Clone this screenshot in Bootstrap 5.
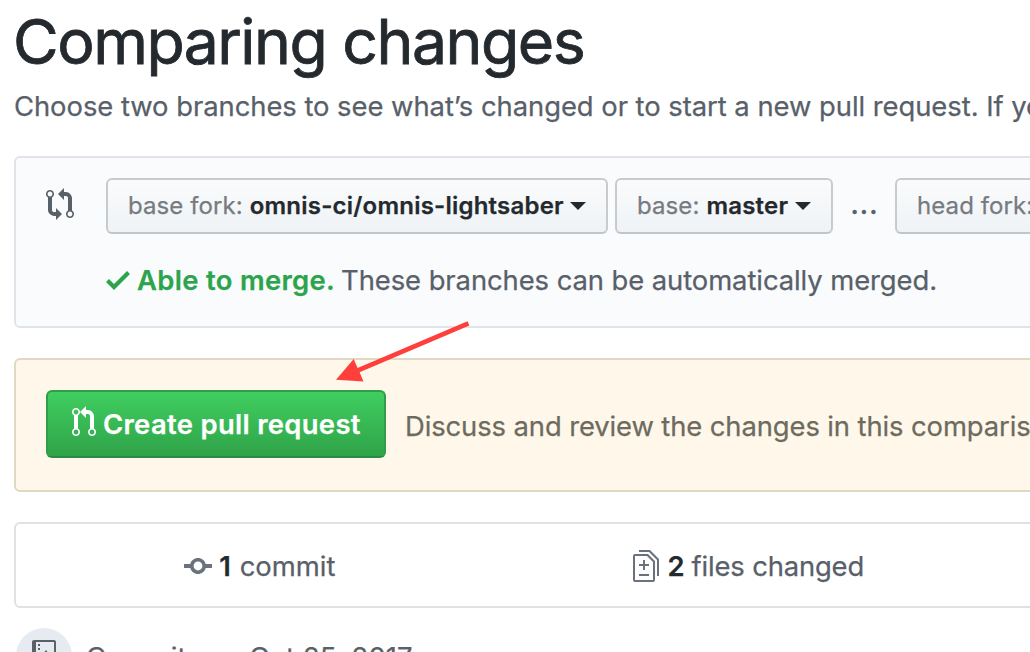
<!DOCTYPE html>
<html lang="en">
<head>
<meta charset="utf-8">
<meta name="viewport" content="width=device-width, initial-scale=1">
<title>Comparing changes</title>
<link href="https://cdn.jsdelivr.net/npm/bootstrap@5.3.0/dist/css/bootstrap.min.css" rel="stylesheet">
<style>
body{font-family:Inter,Roboto,sans-serif;font-size:27.4px;font-weight:400;line-height:42px;color:#586069;background:#fff;height:652px;overflow:hidden;-webkit-text-stroke:.25px}
.page{width:1964px;padding:1px 0 0 14px}
.ink{color:#24292e}
.title{font-size:62.5px;line-height:80px;font-weight:400;letter-spacing:-1.5px;-webkit-text-stroke:.8px;color:#24292e;margin:0 0 4px -1px}
.sub{letter-spacing:-.04px;margin-bottom:29px}
svg{display:block;fill:currentColor;flex:none}
.panel{border:2px solid #dfe2e5;border-radius:6px}
.range{height:172px;background:#fafbfd;border-color:#e0e4e9;padding:20px 0 0 30px}
.sel{height:56px;border:2px solid #c8cbce;border-bottom-color:#c1c5c9;border-radius:6px;background:linear-gradient(#fafbfc,#eff3f6);font-size:24px;line-height:52px;padding:0 20px;color:#24292e}
.sel b{font-weight:600;letter-spacing:.22px}
.sel .lab{color:#777b80;letter-spacing:.08px;margin-right:7px}
.tri{border:8px solid transparent;border-top-color:#24292e;border-bottom:0;margin-left:auto;margin-top:0}
.w-fork{width:502px}.w-base{width:218px}.w-dots{width:62px}
.dots{font-weight:600;font-size:26px;letter-spacing:1px;padding-left:1px;margin-top:-2px}
.merge{margin:25px 0 0 60px;letter-spacing:-.07px}
.merge strong{font-weight:600;color:#2ca44c;letter-spacing:.33px;margin:0 6px 0 7px}
.create{height:134px;border-color:#dfd8c2;background:#fff8ea;padding:30px 0 0 30px;margin-top:30px;color:#6d6b60}
.btn-create{width:340px;height:68px;border:2px solid #2f9d49;border-bottom-color:#2a8c41;border-radius:6px;background:linear-gradient(#40ce60,#2fa349);color:#fff;font-weight:600;font-size:27.4px;letter-spacing:.33px;padding:1px 0 0 24px}
.stats{height:86px;margin-top:30px}
.stats b{font-weight:600}
.ava{width:56px;height:56px;background:#e6ebf1}
</style>
</head>
<body>
<div class="page text-nowrap">
  <h1 class="title">Comparing changes</h1>
  <p class="sub">Choose two branches to see what’s changed or to start a new pull request. If you need to, you can also compare across forks.</p>

  <section class="panel range">
    <div class="d-flex align-items-center">
      <svg width="28" height="32" viewBox="0 0 14 16" style="margin-bottom:4px"><path d="M5 12H4c-.27-.02-.48-.11-.69-.31-.21-.2-.3-.42-.31-.69V4.720A1.993 1.993 0 0 0 2 1a1.993 1.993 0 0 0-1 3.720V11c.03.78.34 1.470.94 2.060.6.59 1.280.91 2.060.94h1v2l3-3-3-3v2zM2 1.800c.66 0 1.200.55 1.200 1.200 0 .65-.55 1.200-1.200 1.200C1.350 4.200.8 3.650.8 3c0-.65.55-1.200 1.200-1.200zm11 9.480V5c-.03-.78-.34-1.470-.94-2.060-.6-.59-1.280-.91-2.060-.94H9V0L6 3l3 3V4h1c.27.02.48.11.69.31.21.2.3.42.31.69v6.280A1.993 1.993 0 0 0 12 15a1.993 1.993 0 0 0 1-3.720zm-1 2.920c-.66 0-1.200-.55-1.200-1.200 0-.65.55-1.200 1.200-1.200.65 0 1.200.55 1.200 1.200 0 .65-.55 1.200-1.200 1.200z"/></svg>
      <div class="sel w-fork d-flex align-items-center" style="margin-left:32px"><span class="lab">base fork:</span><b>omnis-ci/omnis-lightsaber</b><span class="tri"></span></div>
      <div class="sel w-base d-flex align-items-center" style="margin-left:7px"><span class="lab">base:</span><b>master</b><span class="tri"></span></div>
      <span class="w-dots text-center dots">...</span>
      <div class="sel w-fork d-flex align-items-center"><span class="lab">head fork:</span><b>omnis-ci/omnis-lightsaber</b><span class="tri"></span></div>
    </div>
    <div class="merge d-flex align-items-center">
      <svg width="24" height="32" viewBox="0 0 12 16"><path fill="#2ca44c" d="M12 5l-8 8-4-4 1.500-1.500L4 10l6.500-6.500z"/></svg>
      <strong>Able to merge.</strong><span>These branches can be automatically merged.</span>
    </div>
  </section>

  <section class="panel create d-flex align-items-start">
    <button type="button" class="btn btn-create d-flex align-items-center"><svg width="24" height="32" viewBox="0 0 12 16" style="margin:0 7px 6px 0"><path d="M11 11.280V5c-.03-.78-.34-1.470-.94-2.060C9.460 2.350 8.780 2.030 8 2H7V0L4 3l3 3V4h1c.27.02.48.11.69.31.21.2.3.42.31.69v6.280A1.993 1.993 0 0 0 10 15a1.993 1.993 0 0 0 1-3.720zm-1 2.920c-.66 0-1.200-.55-1.200-1.200 0-.65.55-1.200 1.200-1.200.65 0 1.200.55 1.200 1.200 0 .65-.55 1.200-1.200 1.200zM4 3c0-1.110-.89-2-2-2a1.993 1.993 0 0 0-1 3.720v6.560A1.993 1.993 0 0 0 2 15a1.993 1.993 0 0 0 1-3.720V4.720c.59-.34 1-.98 1-1.720zm-.8 10c0 .66-.55 1.200-1.200 1.200-.65 0-1.200-.55-1.200-1.200 0-.65.55-1.200 1.200-1.200.65 0 1.200.55 1.200 1.200zM2 4.200C1.340 4.200.8 3.650.8 3c0-.65.55-1.200 1.200-1.200.65 0 1.200.55 1.200 1.200 0 .65-.55 1.200-1.200 1.200z"/></svg>Create pull request</button>
    <span style="margin:15px 0 0 19px;letter-spacing:-.1px">Discuss and review the changes in this comparison with others.</span>
  </section>

  <section class="panel stats d-flex align-items-center">
    <div class="col-3 d-flex justify-content-center align-items-center" style="padding-top:2px"><svg width="28" height="32" viewBox="0 0 14 16" style="margin:0 7px 1px 1px"><path fill="#6a737d" d="M10.860 7c-.45-1.720-2-3-3.860-3-1.860 0-3.410 1.280-3.860 3H0v2h3.140c.45 1.720 2 3 3.860 3 1.860 0 3.410-1.280 3.860-3H14V7h-3.140zM7 10.200c-1.220 0-2.200-.98-2.200-2.200 0-1.220.98-2.200 2.200-2.200 1.220 0 2.200.98 2.200 2.200 0 1.220-.98 2.200-2.200 2.200z"/></svg><b class="ink" style="margin-right:9px">1</b><span>commit</span></div>
    <div class="col-3 d-flex justify-content-center align-items-center" style="padding:2px 0 0 6px"><svg width="26" height="32" viewBox="0 0 13 16" style="margin:0 8px 1px 0"><path fill="#6a737d" d="M6 7h2v1H6v2H5V8H3V7h2V5h1v2zm-3 6h5v-1H3v1zM7.500 2L11 5.500V15c0 .55-.45 1-1 1H1c-.55 0-1-.45-1-1V3c0-.55.45-1 1-1h6.500zM10 6L7 3H1v12h9V6zM8.500 0H3v1h5l4 4v8h1V4.500L8.500 0z"/></svg><b class="ink" style="margin-right:7px">2</b><span style="letter-spacing:-.15px">files changed</span></div>
  </section>

  <div class="d-flex align-items-start" style="margin-top:20px">
    <div class="ava rounded-circle d-flex justify-content-center" style="padding-top:12px;margin-left:2px"><svg width="24" height="32" viewBox="0 0 12 16"><path d="M4 3H3V2h1v1zM3 5h1V4H3v1zm4 0L4 9h2v7h2V9h2L7 5zm4-5H1C.45 0 0 .45 0 1v12c0 .55.45 1 1 1h4v-1H1v-2h4v-1H2V1h9.020L11 10H9v1h2v2H9v1h2c.55 0 1-.45 1-1V1c0-.55-.45-1-1-1z"/></svg></div>
    <span style="margin:8px 0 0 14px;letter-spacing:.1px">Commits on Oct 25, 2017</span>
  </div>
</div>
<svg class="position-absolute" style="left:330px;top:316px" width="146" height="72" viewBox="330 316 146 72"><path fill="#ff3f3b" d="M336 379.700L353.700 359l3.900 8.900L467.500 321.200l1.900 4.300L359.600 372.200l3.900 9.300z"/></svg>
<script src="https://cdn.jsdelivr.net/npm/bootstrap@5.3.0/dist/js/bootstrap.bundle.min.js"></script>
</body>
</html>
